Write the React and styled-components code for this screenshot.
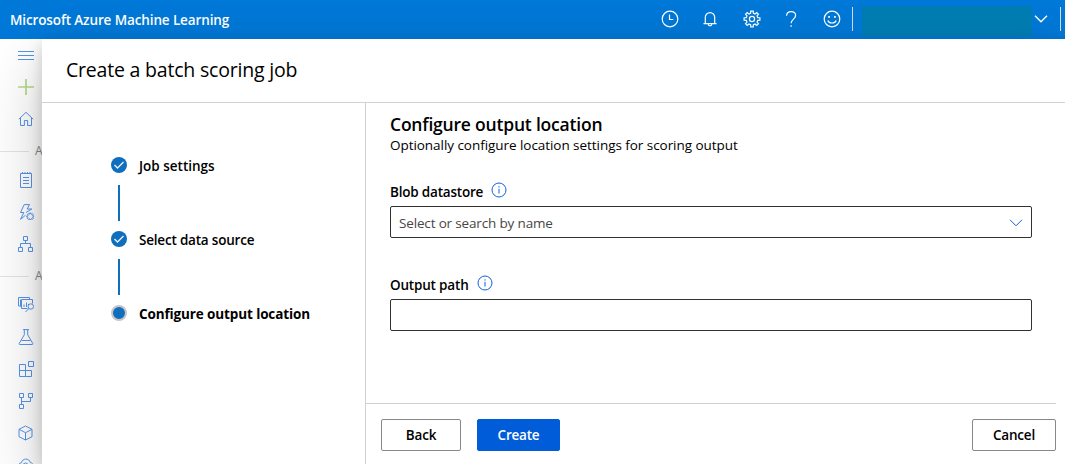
import React from 'react';
import styled, { createGlobalStyle } from 'styled-components';

const GlobalStyle = createGlobalStyle`
  *, *::before, *::after { box-sizing: border-box; }
  body { margin: 0; background: #fff; }
  button, input { font: inherit; }
`;

const Page = styled.div`
  width: 1065px;
  height: 464px;
  display: flex;
  flex-direction: column;
  overflow: hidden;
  font-family: 'Open Sans', 'Noto Sans', sans-serif;
  font-size: 13.5px;
  color: #000;
`;

const Text = styled.span`
  display: block;
  white-space: nowrap;
  font-size: ${(p) => p.$size || 13.5}px;
  font-weight: ${(p) => p.$weight || 400};
  line-height: ${(p) => p.$line || 20}px;
  letter-spacing: ${(p) => p.$track || 0}px;
  color: ${(p) => p.$color || 'inherit'};
`;

const TopBar = styled.header`
  flex: 0 0 39px;
  display: flex;
  align-items: center;
  justify-content: space-between;
  padding-left: 10px;
  background: #0078d7;
  color: #fff;
`;

const Tools = styled.div`
  display: flex;
  align-items: center;
  height: 39px;
`;

const Tool = styled.span`
  width: ${(p) => p.$width || 40}px;
  height: 38px;
  margin-bottom: 1px;
  padding-left: ${(p) => p.$shift || 0}px;
  display: flex;
  align-items: center;
  justify-content: center;
`;

const Separator = styled.span`
  width: 1px;
  height: 24px;
  margin-bottom: 1px;
  background: #d5dbe2;
`;

const Account = styled.span`
  width: 170px;
  height: 30px;
  margin: 2px 0 0 9px;
  background: #007db3;
`;

const Body = styled.div`
  flex: 1;
  display: flex;
  min-height: 0;
`;

const Sidebar = styled.nav`
  flex: 0 0 42px;
  display: flex;
  flex-direction: column;
  background: #fff;
  overflow: hidden;
`;

const NavItem = styled.span`
  flex: 0 0 ${(p) => p.$height || 32}px;
  display: flex;
  align-items: center;
  padding-left: 18px;
`;

const NavGroup = styled.div`
  flex: 0 0 ${(p) => p.$height}px;
  display: flex;
  align-items: center;
  gap: 6px;
  padding-top: ${(p) => p.$top}px;
  &::before {
    content: '';
    flex: 0 0 29px;
    height: 1px;
    background: #e4e4e4;
  }
`;

const Panel = styled.main`
  flex: 1;
  display: flex;
  flex-direction: column;
  background: #fff;
  position: relative;
  box-shadow: 0 25.6px 57.6px rgba(0, 0, 0, 0.22), 0 4.8px 14.4px rgba(0, 0, 0, 0.18);
`;

const PanelHeader = styled.div`
  flex: 0 0 64px;
  padding: 17px 24px 0;
  border-bottom: 1px solid #d2d2d2;
`;

const Columns = styled.div`
  flex: 1;
  display: flex;
`;

const Steps = styled.div`
  width: 324px;
  padding: 54px 0 0 69px;
  border-right: 1px solid #d2d2d2;
`;

const Step = styled.div`
  height: 16px;
  display: flex;
  align-items: center;
  gap: 12px;
  & > ${Text} {
    padding-top: 2px;
  }
`;

const Connector = styled.div`
  width: 2px;
  height: 36px;
  margin: 12px 0 10px 7px;
  background: #106ebe;
`;

const Dot = styled.span`
  flex: 0 0 16px;
  height: 16px;
  border-radius: 50%;
  border: 2px solid #c8c6c4;
  background: #106ebe;
`;

const Main = styled.section`
  flex: 1;
  display: flex;
  flex-direction: column;
`;

const Form = styled.div`
  height: 300px;
  padding: 9px 33px 0 24px;
`;

const Field = styled.div`
  padding-top: ${(p) => p.$top}px;
`;

const LabelRow = styled.div`
  display: flex;
  height: 25px;
  gap: 8px;
  & > svg {
    margin-top: 1px;
  }
`;

const SelectBox = styled.div`
  height: 32px;
  display: flex;
  align-items: center;
  justify-content: space-between;
  padding: 1px 8px 0;
  border: 1px solid #323130;
  border-radius: 2px;
`;

const TextInput = styled.input`
  display: block;
  width: 100%;
  height: 32px;
  padding: 0 8px;
  border: 1px solid #323130;
  border-radius: 2px;
  background: #fff;
`;

const Footer = styled.div`
  display: flex;
  gap: 16px;
  margin-right: 9px;
  padding: 15px 0 0 15px;
  border-top: 1px solid #d2d2d2;
`;

const Button = styled.button`
  width: ${(p) => p.$width}px;
  height: 32px;
  padding: 0;
  display: flex;
  align-items: center;
  justify-content: center;
  border: 1px solid ${(p) => (p.$primary ? '#015cda' : '#8a8886')};
  border-radius: 2px;
  background: ${(p) => (p.$primary ? '#015cda' : '#fff')};
  color: ${(p) => (p.$primary ? '#fff' : '#000')};
  margin-left: ${(p) => (p.$end ? 'auto' : 0)};
`;

const Svg = styled.svg`
  display: block;
  flex: none;
  fill: none;
  stroke: ${(p) => p.$color || '#5694ea'};
  stroke-width: ${(p) => p.$stroke || 1};
`;

const Icon = ({ size = 16, color, stroke, children }) => (
  <Svg width={size} height={size} viewBox={`0 0 ${size} ${size}`} $color={color} $stroke={stroke}>
    {children}
  </Svg>
);

const gearPath = (cx, cy, outer, inner, teeth) => {
  const points = [];
  const step = (Math.PI * 2) / teeth;
  for (let i = 0; i < teeth; i += 1) {
    const a = i * step - Math.PI / 2;
    [[-0.3, inner], [-0.2, outer], [0.2, outer], [0.3, inner]].forEach(([t, r]) => {
      points.push(`${(cx + r * Math.cos(a + t * step)).toFixed(2)} ${(cy + r * Math.sin(a + t * step)).toFixed(2)}`);
    });
  }
  return `M${points.join('L')}Z`;
};

const ClockIcon = () => (
  <Icon size={18} color="#fff" stroke={1.2}>
    <circle cx="9" cy="9" r="7.8" />
    <path d="M8.5 4.5v5h3.8" />
  </Icon>
);

const BellIcon = () => (
  <Icon size={18} color="#fff" stroke={1.2}>
    <path d="M4.3 13.5V7.3a4.7 4.7 0 0 1 9.4 0v6.2M2.5 13.6h13M7.2 14a1.8 1.8 0 0 0 3.6 0" />
  </Icon>
);

const GearIcon = () => (
  <Icon size={18} color="#fff" stroke={1.2}>
    <path d={gearPath(9, 9, 8, 5.9, 8)} />
    <circle cx="9" cy="9" r="2.6" />
  </Icon>
);

const HelpIcon = () => (
  <Icon size={18} color="#fff" stroke={1.2}>
    <path d="M4.6 5.7C4.6 3 6.4 1.6 9.1 1.6c2.7 0 4.5 1.5 4.5 3.9 0 3.5-4.5 3.8-4.5 7.8" />
    <path d="M9.1 15.2v1.5" strokeWidth="1.4" />
  </Icon>
);

const SmileIcon = () => (
  <Icon size={18} color="#fff" stroke={1.2}>
    <circle cx="9" cy="9" r="7.8" />
    <path d="M4.8 10.5c1.3 3.3 7.1 3.3 8.4 0" />
    <path d="M5.2 6.8h1.8M11 6.8h1.8" strokeWidth="1.8" />
  </Icon>
);

const InfoIcon = () => (
  <Icon color="#1160dc">
    <circle cx="8" cy="8" r="7" />
    <path d="M8 6.8v4.7M8 4.3v1.3" />
  </Icon>
);

const DoneIcon = () => (
  <Icon>
    <circle cx="8" cy="8" r="8" fill="#106ebe" stroke="none" />
    <path d="M3.5 8l3 3.1 6-6.100" stroke="#e8f1fa" strokeWidth="1.4" />
  </Icon>
);

const MenuIcon = () => (
  <Icon><path d="M0 4.5h16M0 8.5h16M0 12.5h16" /></Icon>
);
const PlusIcon = () => (
  <Icon color="#b3da8b" stroke={1.7}><path d="M8 0v16M0 8h16" /></Icon>
);
const HomeIcon = () => (
  <Icon><path d="M.8 8.2L8 1.3l7.2 6.9M2.5 7v7.5h3.9v-5h3.2v5h3.9V7" /></Icon>
);
const NotebookIcon = () => (
  <Icon><path d="M2.5 1.5h11v14h-11zM4.5 0v2M7 0v2M9.5 0v2M12 0v2M5 5.5h6M5 8.5h6M5 11.5h6" /></Icon>
);
const BoltIcon = () => (
  <Icon>
    <path d="M8 8.5l5.8-3.5H9.2L11.5.6H6.2L2.5 8.5h3.3L2.5 15.4l5-4.2" />
    <path d={gearPath(12.3, 12.5, 3.6, 2.5, 8)} />
    <circle cx="12.3" cy="12.5" r="1.4" stroke="#fff" />
  </Icon>
);
const TreeIcon = () => (
  <Icon><path d="M5.5.5h4v4h-4zM.5 11.5h4v4h-4zM10.5 11.5h4v4h-4zM7.5 4.5V8M2.5 11.5v-4h10v4" /></Icon>
);
const MonitorIcon = () => (
  <Icon>
    <path d="M9.5 12.5H3.5v-9h11v4M3.5 10.5h-1v-7M.5 8.5v-7h11v2M2 10h-1.5v-2M6 8.5V11M8.5 6.5V11M10.5 8V9" />
    <circle cx="12.8" cy="10.5" r="2.7" />
    <path d="M10.9 12.5L7.5 16" />
  </Icon>
);
const FlaskIcon = () => (
  <Icon><path d="M5 .6h6M6.3.6v5.2L1.2 14.5q-.3 1 .6 1h12.4q.9 0 .6-1L9.7 5.8V.6M3.500 11.500h9" /></Icon>
);
const BlocksIcon = () => (
  <Icon><path d="M1.5 3.5h6v6h-6zM1.5 9.5h6v6h-6zM7.5 9.5h6v6h-6zM10.5.5h5v5h-5z" /></Icon>
);
const BranchIcon = () => (
  <Icon><path d="M1.5.5h4v4h-4zM10.5.5h4v4h-4zM1.5 11.5h4v4h-4zM3.5 4.5v7M12.5 4.5v4h-9" /></Icon>
);
const CubeIcon = () => (
  <Icon><path d="M7.5 1L14 4.3v7.4L7.5 15 1 11.7V4.3zM1 4.3l6.5 3.4L14 4.3M7.5 7.7V15" /></Icon>
);
const CloudIcon = () => (
  <Icon>
    <path d="M3.5 11.5C-.5 11.5-.3 5.8 3.4 5.8 4.3 1 11.2.8 12.3 5.6c3.7 0 4 5.9.2 5.9" />
    <circle cx="7.5" cy="8.5" r="2.5" />
  </Icon>
);

const Chevron = ({ color, stroke }) => (
  <Svg width="14" height="8" viewBox="0 0 14 8" $color={color} $stroke={stroke}>
    <path d="M1 .8l6 6 6-6" />
  </Svg>
);

const GroupLabel = () => <Text $size={12} $color="#8a8a8a">A</Text>;

export default function App() {
  return (
    <Page>
      <GlobalStyle />
      <TopBar>
        <Text $weight={600} $track={-0.12}>Microsoft Azure Machine Learning</Text>
        <Tools>
          <Tool><ClockIcon /></Tool>
          <Tool><BellIcon /></Tool>
          <Tool $width={44}><GearIcon /></Tool>
          <Tool $width={34}><HelpIcon /></Tool>
          <Tool $width={44} $shift={4}><SmileIcon /></Tool>
          <Separator />
          <Account />
          <Tool $width={18}><Chevron color="#fff" stroke={1.4} /></Tool>
          <Tool $width={10} />
          <Separator />
          <Tool $width={4} />
        </Tools>
      </TopBar>
      <Body>
        <Sidebar>
          <NavItem><MenuIcon /></NavItem>
          <NavItem><PlusIcon /></NavItem>
          <NavItem><HomeIcon /></NavItem>
          <NavGroup $height={29} $top={3}><GroupLabel /></NavGroup>
          <NavItem><NotebookIcon /></NavItem>
          <NavItem><BoltIcon /></NavItem>
          <NavItem><TreeIcon /></NavItem>
          <NavGroup $height={28} $top={4}><GroupLabel /></NavGroup>
          <NavItem><MonitorIcon /></NavItem>
          <NavItem $height={33}><FlaskIcon /></NavItem>
          <NavItem><BlocksIcon /></NavItem>
          <NavItem><BranchIcon /></NavItem>
          <NavItem><CubeIcon /></NavItem>
          <NavItem><CloudIcon /></NavItem>
        </Sidebar>
        <Panel>
          <PanelHeader>
            <Text $size={19.5} $line={28} $track={-0.2}>Create a batch scoring job</Text>
          </PanelHeader>
          <Columns>
            <Steps>
              <Step><DoneIcon /><Text $weight={600}>Job settings</Text></Step>
              <Connector />
              <Step><DoneIcon /><Text $weight={600} $track={-0.2}>Select data source</Text></Step>
              <Connector />
              <Step><Dot /><Text $weight={700} $track={-0.12}>Configure output location</Text></Step>
            </Steps>
            <Main>
              <Form>
                <Text $size={17.5} $weight={600} $line={24} $track={-0.2}>Configure output location</Text>
                <Text $line={19} $track={-0.05}>Optionally configure location settings for scoring output</Text>
                <Field $top={26}>
                  <LabelRow><Text $weight={600} $line={23} $track={-0.2}>Blob datastore</Text><InfoIcon /></LabelRow>
                  <SelectBox>
                    <Text $color="#484644" $track={-0.16}>Select or search by name</Text>
                    <Chevron color="#0f5fc0" />
                  </SelectBox>
                </Field>
                <Field $top={36}>
                  <LabelRow><Text $weight={600} $line={23} $track={-0.18}>Output path</Text><InfoIcon /></LabelRow>
                  <TextInput aria-label="Output path" />
                </Field>
              </Form>
              <Footer>
                <Button $width={80}><Text $weight={600} $track={-0.2}>Back</Text></Button>
                <Button $width={83} $primary><Text $weight={600} $track={-0.2}>Create</Text></Button>
                <Button $width={84} $end><Text $weight={600} $track={-0.2}>Cancel</Text></Button>
              </Footer>
            </Main>
          </Columns>
        </Panel>
      </Body>
    </Page>
  );
}
